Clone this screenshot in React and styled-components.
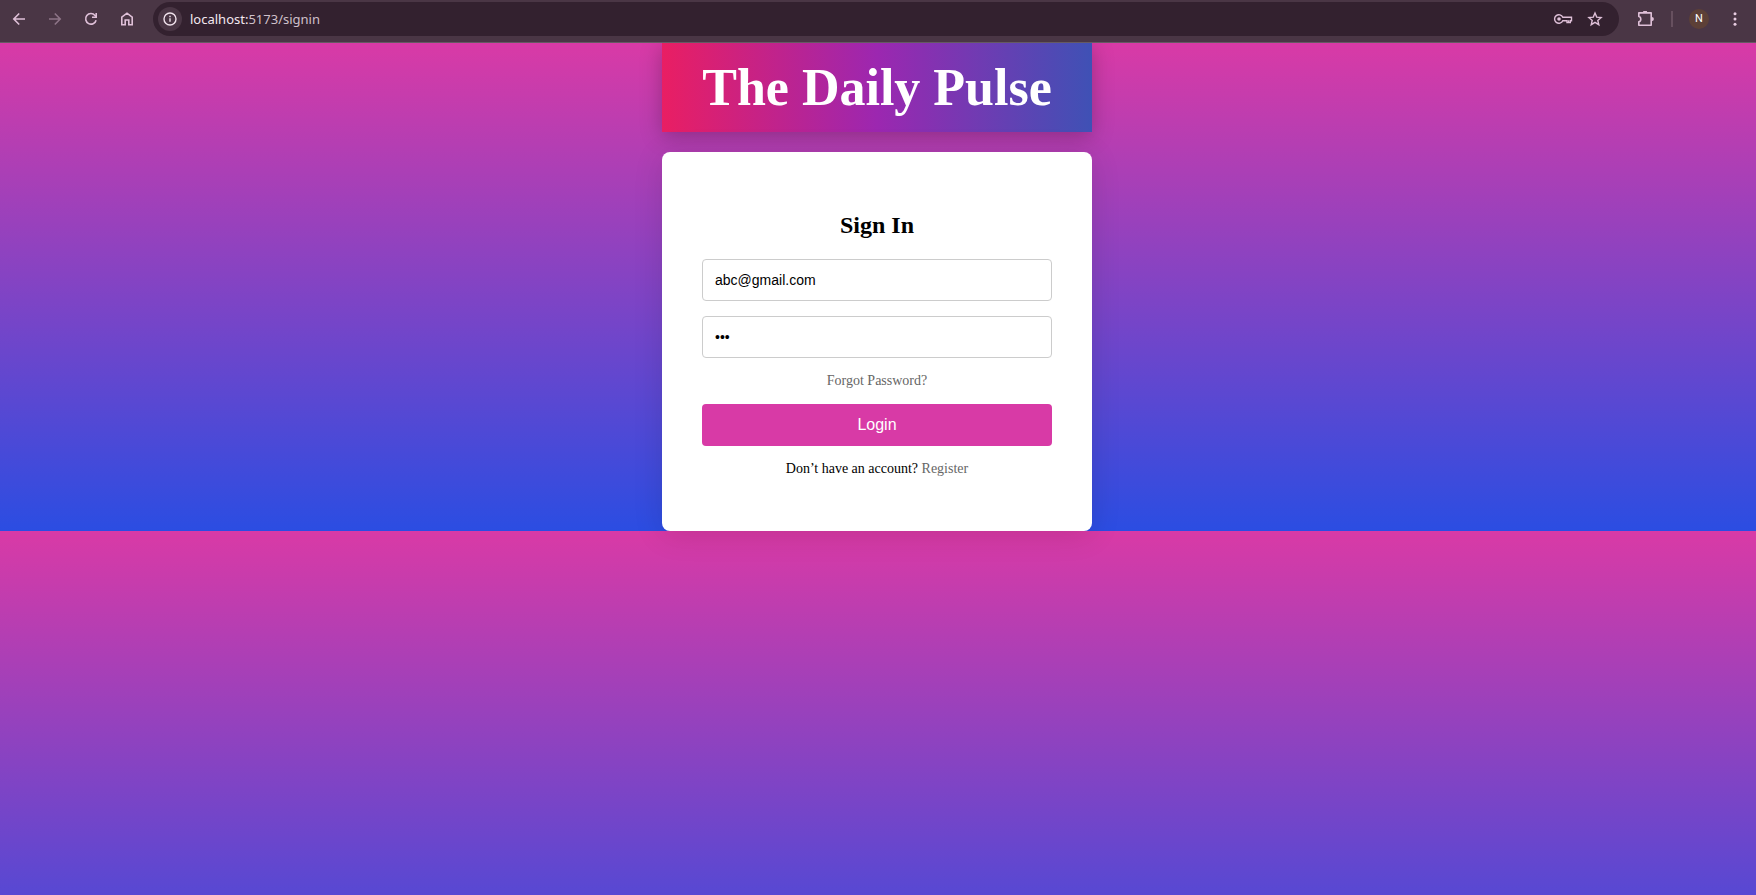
import React from "react";
import styled, { createGlobalStyle } from "styled-components";

const GlobalStyle = createGlobalStyle`
  *, *::before, *::after { box-sizing: border-box; }
  body {
    margin: 0;
    font-family: "Liberation Serif", "Times New Roman", serif;
    color: #000;
  }
`;

const Screen = styled.div`
  display: flex;
  flex-direction: column;
  min-height: 100vh;
`;

const Toolbar = styled.header`
  position: relative;
  z-index: 1;
  display: flex;
  align-items: center;
  gap: 12px;
  padding: 2px 9px 6px 7px;
  background: #4a3645;
  border-bottom: 1px solid #655a63;
`;

const ToolButton = styled.button`
  display: flex;
  align-items: center;
  justify-content: center;
  width: 24px;
  height: 24px;
  padding: 0;
  border: 0;
  background: none;
  color: #dfc0d8;
  opacity: ${({ $faded }) => ($faded ? 0.45 : 1)};
`;

const AddressBar = styled.div`
  flex: 1;
  display: flex;
  align-items: center;
  gap: 8px;
  height: 34px;
  margin: 0 0 0 2px;
  padding: 0 12px 0 5px;
  border-radius: 17px;
  background: #33212f;
`;

const SiteInfo = styled(ToolButton)`
  border-radius: 50%;
  background: #4a3645;
  color: #f0e2ec;
`;

const Address = styled.p`
  flex: 1;
  margin: 0;
  color: #cfc0ca;
  font: 13px/20px "Noto Sans", sans-serif;
`;

const Host = styled.span`
  color: #f3e8f0;
`;

const AddressActions = styled.div`
  display: flex;
  gap: 8px;
`;

const ToolbarActions = styled.div`
  display: flex;
  align-items: center;
  gap: 14px;
  padding-left: 2px;
`;

const Divider = styled.span`
  width: 2px;
  height: 16px;
  background: #67505f;
`;

const ProfileButton = styled.button`
  width: 20px;
  height: 20px;
  margin-left: 2px;
  padding: 0;
  border: 0;
  border-radius: 50%;
  background: #5d4037;
  color: #fff;
  font: 11px/20px Roboto, sans-serif;
`;

const MenuButton = styled(ToolButton)`
  color: #e8cde1;
`;

const Page = styled.main`
  flex: 1;
  display: flex;
  flex-direction: column;
  align-items: center;
  gap: 20px;
  padding-right: 2px;
  background: linear-gradient(to bottom, #d93aa6, #2b4de2) 0 0 / 100% 488px;
`;

const Banner = styled.div`
  width: 100%;
  max-width: 430px;
  padding: 15px;
  background: linear-gradient(to right, #e91e63, #9c27b0, #3f51b5);
  box-shadow: 0 4px 20px rgba(0, 0, 0, 0.25);
  text-align: center;
`;

const Title = styled.h1`
  margin: 0;
  color: #fff;
  font-size: 52px;
  line-height: 59px;
  white-space: nowrap;
`;

const Card = styled.form`
  width: 100%;
  max-width: 430px;
  padding: 60px 40px 54px;
  border-radius: 8px;
  background: #fff;
  box-shadow: 0 4px 30px rgba(0, 0, 0, 0.12);
  text-align: center;
`;

const Heading = styled.h2`
  margin: 0 0 20px;
  font-size: 24px;
  line-height: 27px;
`;

const Field = styled.input`
  display: block;
  width: 100%;
  height: 42px;
  margin-bottom: 15px;
  padding: 12px;
  border: 1px solid #ccc;
  border-radius: 4px;
  background: #fff;
  color: #000;
  font: 14px/16px "Liberation Sans", Arial, sans-serif;
`;

const Note = styled.p`
  margin: 0;
  font-size: 14px;
  line-height: 16px;
`;

const TextLink = styled.a`
  color: #666;
  text-decoration: none;
`;

const LoginButton = styled.button`
  display: block;
  width: 100%;
  height: 42px;
  margin: 15px 0;
  padding: 12px;
  border: 0;
  border-radius: 4px;
  background: #d83aa6;
  color: #fff;
  font: 16px/18px "Liberation Sans", Arial, sans-serif;
`;

const Svg = styled.svg`
  display: block;
  flex: none;
`;

function Icon({ width = 16, children }) {
  return (
    <Svg width={width} height="16" viewBox={`0 0 ${width} 16`} fill="none" stroke="currentColor" strokeWidth="1.6" aria-hidden="true">
      {children}
    </Svg>
  );
}

export default function App() {
  return (
    <Screen>
      <GlobalStyle />
      <Toolbar>
        <ToolButton type="button" aria-label="Back">
          <Icon><path d="M14 8H3M8.2 2.5 2.8 8l5.4 5.5" /></Icon>
        </ToolButton>
        <ToolButton type="button" aria-label="Forward" $faded>
          <Icon><path d="M2 8h11M7.8 2.5 13.2 8l-5.4 5.5" /></Icon>
        </ToolButton>
        <ToolButton type="button" aria-label="Reload">
          <Icon>
            <path d="M13.1 9.2A5.3 5.3 0 1 1 12 4.4l1 1.1" />
            <path d="M13.2 2v4.2H9" />
          </Icon>
        </ToolButton>
        <ToolButton type="button" aria-label="Home">
          <Icon><path d="M2.8 6.2 8 2.2l5.2 4v7.6H9.8V9H6.2v4.8H2.8z" /></Icon>
        </ToolButton>
        <AddressBar>
          <SiteInfo type="button" aria-label="Site information">
            <Icon>
              <circle cx="8" cy="8" r="6" strokeWidth="1.4" />
              <path strokeWidth="1.4" d="M8 7.2v3.6M8 4.8v1.5" />
            </Icon>
          </SiteInfo>
          <Address><Host>localhost:</Host>5173/signin</Address>
          <AddressActions>
            <ToolButton type="button" aria-label="Passwords">
              <Icon width={20}>
                <g strokeWidth="1.4">
                  <path d="M9.8 6.3a4.3 4.3 0 1 0 0 3.4H14v1.8h3.3V9.7h1.2V6.3z" />
                  <path d="M15.6 11.5V9.3" />
                </g>
                <circle cx="6" cy="8" r="1.8" fill="currentColor" stroke="none" />
              </Icon>
            </ToolButton>
            <ToolButton type="button" aria-label="Bookmark">
              <Icon>
                <path strokeWidth="1.4" d="m8 2.1 1.7 4 4.4.4-3.3 2.9 1 4.3L8 11.4l-3.8 2.3 1-4.3-3.3-2.9 4.4-.4z" />
              </Icon>
            </ToolButton>
          </AddressActions>
        </AddressBar>
        <ToolbarActions>
          <ToolButton type="button" aria-label="Extensions">
            <Icon width={18}>
              <path d="M3 1.9h12.2v12.3H2.8v-3.4c1.2-.2 2-1.1 2-2.6s-.8-2.5-2-2.7V1.9z" strokeLinejoin="round" />
              <path d="M7 1.5a2.1 2.1 0 0 1 4.2 0zM15.8 6a2.1 2.1 0 0 1 0 4.2z" fill="currentColor" stroke="none" />
              <path d="M7.4 1.2C7.6-.6 10.6-.6 10.8 1.2z" fill="currentColor" stroke="none" />
            </Icon>
          </ToolButton>
          <Divider />
          <ProfileButton type="button" aria-label="Profile">N</ProfileButton>
          <MenuButton type="button" aria-label="Menu">
            <Icon>
              <g fill="currentColor" stroke="none">
                <circle cx="8" cy="2.8" r="1.5" />
                <circle cx="8" cy="8" r="1.5" />
                <circle cx="8" cy="13.2" r="1.5" />
              </g>
            </Icon>
          </MenuButton>
        </ToolbarActions>
      </Toolbar>
      <Page>
        <Banner><Title>The Daily Pulse</Title></Banner>
        <Card onSubmit={(event) => event.preventDefault()}>
          <Heading>Sign In</Heading>
          <Field type="email" aria-label="Email" defaultValue="abc@gmail.com" />
          <Field type="password" aria-label="Password" defaultValue="abc" />
          <Note><TextLink href="#forgot">Forgot Password?</TextLink></Note>
          <LoginButton type="submit">Login</LoginButton>
          <Note>Don’t have an account? <TextLink href="#register">Register</TextLink></Note>
        </Card>
      </Page>
    </Screen>
  );
}
